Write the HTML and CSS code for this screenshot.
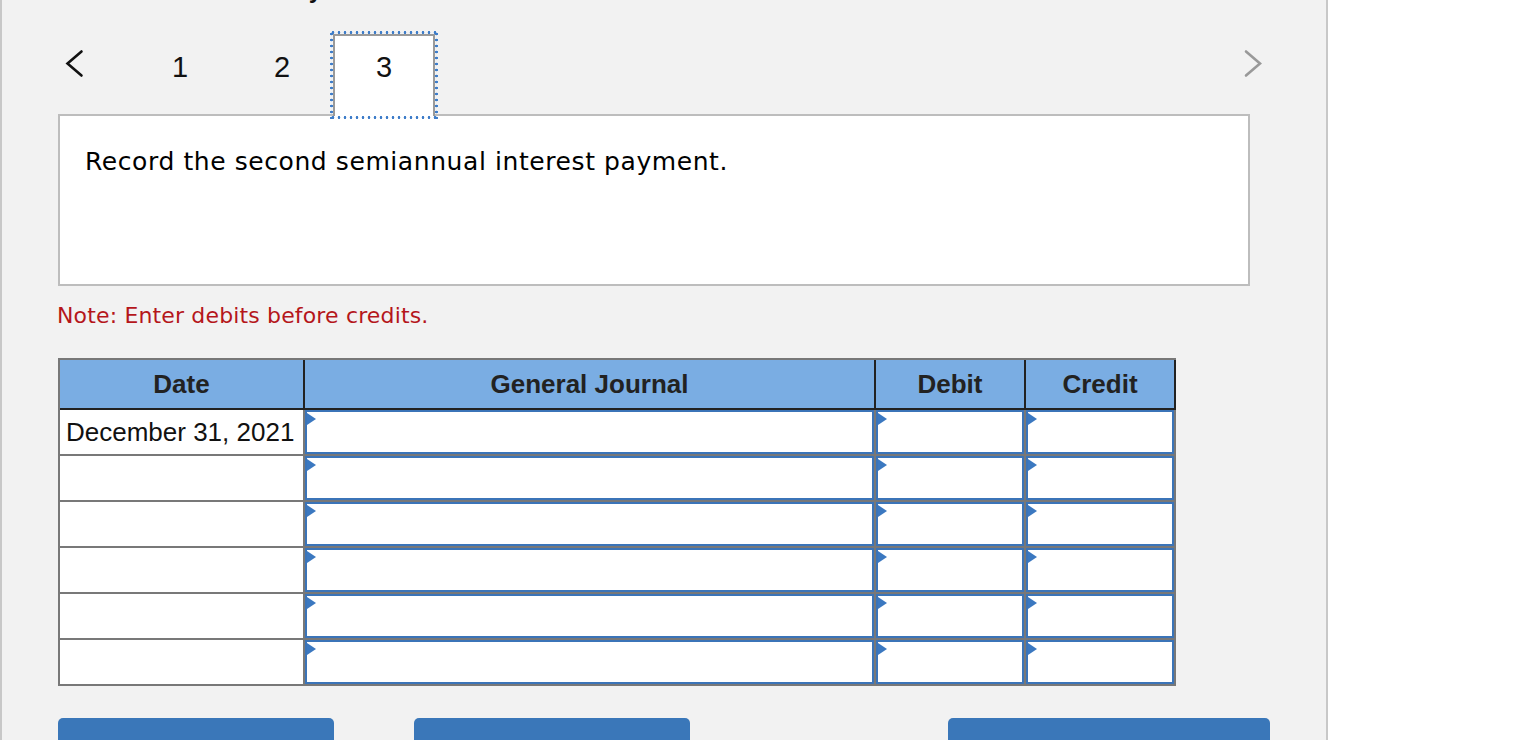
FILE: index.html
```html
<!DOCTYPE html>
<html lang="en">
<head>
<meta charset="utf-8">
<title>Journal entry worksheet</title>
<link rel="stylesheet" href="styles.css">
</head>
<body>
<div class="panel">
  <div class="ghost"><h2 class="ghost-title">Journal entry worksheet</h2></div>
  <nav class="steps">
    <button class="arrow prev" aria-label="Previous">
      <svg width="22" height="30" viewBox="0 0 22 30"><polyline points="17.5,3.5 3.5,15.5 17.5,27.5" fill="none" stroke="#111" stroke-width="2.6" stroke-linecap="round" stroke-linejoin="miter"/></svg>
    </button>
    <div class="tab">1</div>
    <div class="tab">2</div>
    <div class="tab active">3</div>
    <button class="arrow next" aria-label="Next">
      <svg width="22" height="30" viewBox="0 0 22 30"><polyline points="4,3.5 18,15.5 4,27.5" fill="none" stroke="#999" stroke-width="2.6" stroke-linecap="round" stroke-linejoin="miter"/></svg>
    </button>
  </nav>
  <div class="question">Record the second semiannual interest payment.</div>
  <p class="note">Note: Enter debits before credits.</p>
  <table class="journal">
    <thead>
      <tr>
        <th class="c-date">Date</th>
        <th class="c-gj">General Journal</th>
        <th class="c-dr">Debit</th>
        <th class="c-cr">Credit</th>
      </tr>
    </thead>
    <tbody>
      <tr><td class="date">December 31, 2021</td><td><div class="entry"></div></td><td><div class="entry"></div></td><td><div class="entry"></div></td></tr>
      <tr><td class="date"></td><td><div class="entry"></div></td><td><div class="entry"></div></td><td><div class="entry"></div></td></tr>
      <tr><td class="date"></td><td><div class="entry"></div></td><td><div class="entry"></div></td><td><div class="entry"></div></td></tr>
      <tr><td class="date"></td><td><div class="entry"></div></td><td><div class="entry"></div></td><td><div class="entry"></div></td></tr>
      <tr><td class="date"></td><td><div class="entry"></div></td><td><div class="entry"></div></td><td><div class="entry"></div></td></tr>
      <tr><td class="date"></td><td><div class="entry"></div></td><td><div class="entry"></div></td><td><div class="entry"></div></td></tr>
    </tbody>
  </table>
  <div class="actions">
    <button class="btn btn-record" aria-label="Record entry"></button>
    <button class="btn btn-clear" aria-label="Clear entry"></button>
    <button class="btn btn-view" aria-label="View general journal"></button>
  </div>
</div>
</body>
</html>
```

FILE: styles.css
```css
* { box-sizing: border-box; }
html, body { margin: 0; height: 100%; }
body {
  background: #ffffff;
  font-family: "Liberation Sans", Arial, sans-serif;
  color: #111;
}
.panel {
  width: 1328px;
  height: 740px;
  overflow: hidden;
  background: #f2f2f2;
  border-left: 2px solid #c8c8c8;
  border-right: 2px solid #c8c8c8;
  padding: 0 76px 0 56px;
}
.ghost {
  height: 4px;
  overflow: hidden;
}
.ghost-title {
  margin: -24px 0 0 112px;
  font: bold 24px/28px "Liberation Sans", Arial, sans-serif;
  color: #111;
}
.steps {
  display: flex;
  align-items: flex-start;
  height: 82px;
  margin-top: 30px;
  margin-bottom: -2px;
}
.arrow {
  display: block;
  background: none;
  border: 0;
  padding: 0;
  margin: 14px 0 0 0;
  height: 30px;
  cursor: pointer;
}
.arrow svg { display: block; }
.prev {
  width: 71px;
  padding-left: 6px;
}
.next {
  margin-left: auto;
  margin-right: -14px;
}
.tab {
  width: 102px;
  height: 82px;
  padding-top: 17px;
  text-align: center;
  font: 29px/32px "Liberation Sans", Arial, sans-serif;
  color: #111;
}
.tab.active {
  position: relative;
  z-index: 1;
  background: #ffffff;
  border: 2px solid #9a9a9a;
  border-bottom: 0;
  padding-top: 15px;
}
.tab.active::after {
  content: "";
  position: absolute;
  top: -5px;
  left: -5px;
  right: -5px;
  bottom: -3px;
  pointer-events: none;
  background:
    radial-gradient(circle, #3d7cc9 1.1px, transparent 1.6px) 0 0 / 6px 3px repeat-x,
    radial-gradient(circle, #3d7cc9 1.1px, transparent 1.6px) 0 100% / 6px 3px repeat-x,
    radial-gradient(circle, #3d7cc9 1.1px, transparent 1.6px) 0 0 / 3px 6px repeat-y,
    radial-gradient(circle, #3d7cc9 1.1px, transparent 1.6px) 100% 0 / 3px 6px repeat-y;
}
.question {
  height: 172px;
  background: #ffffff;
  border: 2px solid #bdbdbd;
  padding: 31px 25px 0;
  font: 25px/29px "DejaVu Sans", Verdana, sans-serif;
  letter-spacing: 0.58px;
  color: #000;
}
.note {
  margin: 17px 0 0 -1px;
  font: 22px/26px "DejaVu Sans", Verdana, sans-serif;
  letter-spacing: 0.15px;
  color: #b5161b;
}
.journal {
  margin-top: 29px;
  width: 1118px;
  table-layout: fixed;
  border-collapse: separate;
  border-spacing: 0;
  border-top: 2px solid #787878;
  border-left: 2px solid #787878;
}
.c-date { width: 245px; }
.c-gj { width: 571px; }
.c-dr { width: 150px; }
.c-cr { width: 150px; }
.journal th {
  padding: 0;
  background: #7aade3;
  border-right: 2px solid #222;
  border-bottom: 2px solid #222;
  font: bold 26px/48px "Liberation Sans", Arial, sans-serif;
  color: #222;
  text-align: center;
}
.journal td {
  padding: 0;
  background: #ffffff;
  border-right: 2px solid #787878;
  border-bottom: 2px solid #787878;
  vertical-align: middle;
}
.journal td.date {
  padding-left: 6px;
  font: 26px/28px "Liberation Sans", Arial, sans-serif;
  color: #111;
  white-space: nowrap;
}
.entry {
  position: relative;
  height: 44px;
  background: #ffffff;
  border: 2px solid #3b74b8;
}
.entry::before {
  content: "";
  position: absolute;
  left: 0;
  top: 1px;
  border-left: 9px solid #3b78c0;
  border-top: 6px solid transparent;
  border-bottom: 6px solid transparent;
}
.actions {
  display: flex;
  margin-top: 32px;
}
.btn {
  flex-shrink: 0;
  height: 60px;
  border: 0;
  border-radius: 5px;
  background: #3a77b9;
  padding: 0;
}
.btn-record { width: 276px; }
.btn-clear { width: 276px; margin-left: 80px; }
.btn-view { width: 322px; margin-left: 258px; }
```
